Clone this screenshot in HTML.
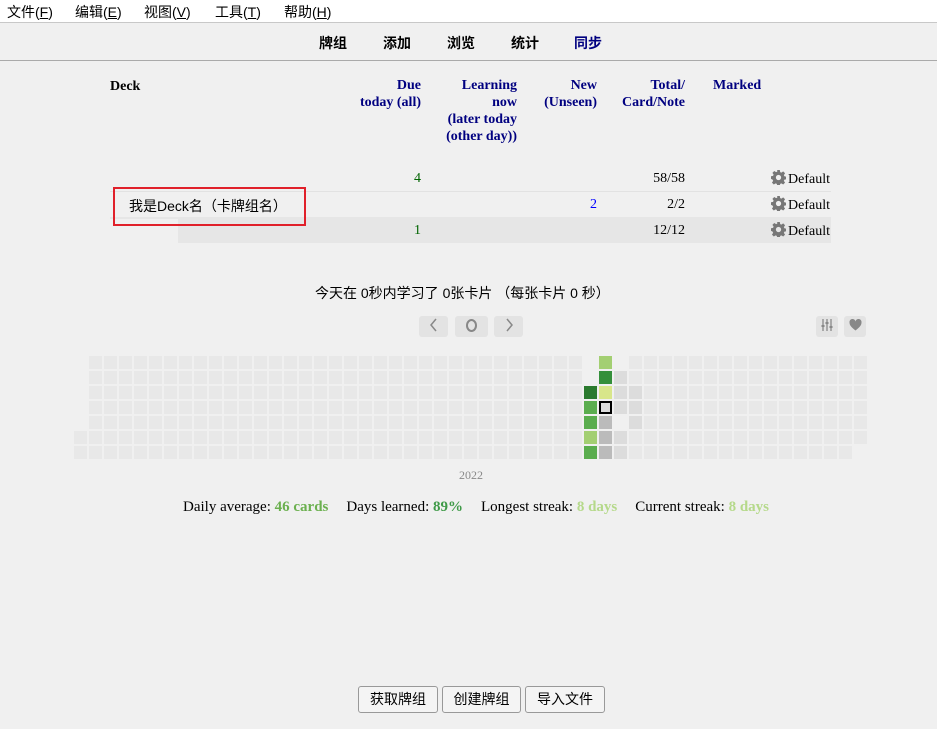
<!DOCTYPE html>
<html><head><meta charset="utf-8"><style>
*{margin:0;padding:0;box-sizing:border-box}
body{width:937px;height:729px;background:#f0f0f0;position:relative;overflow:hidden;font-family:"Liberation Serif","Noto Serif CJK SC",serif;font-size:14px;color:#000}
.a{position:absolute;white-space:nowrap}
.ui{font-family:"Liberation Sans","Noto Sans CJK SC",sans-serif}
.menu{left:0;top:0;width:937px;height:23px;background:#fff;border-bottom:1px solid #c8c8c8}
.menu span{position:absolute;top:2px;font-size:14px}
.tb{left:0;top:23px;width:937px;height:38px;border-bottom:1px solid #aaa;background:#f0f0f0}
.tb span{position:absolute;top:10px;font-size:14px;font-weight:bold}
.h{font-weight:bold;color:#000080;text-align:right;line-height:17px;font-size:14px}
.r{text-align:right}
.gear{display:inline-block;vertical-align:-2px;margin-right:2px}
.cell{position:absolute;width:13px;height:13px;background:#e8e8e8}
.btn{position:absolute;top:686px;height:27px;border:1px solid #999;border-radius:3px;background:#f4f4f4;font-size:14px;text-align:center;line-height:25px}
.nb{position:absolute;top:316px;height:21px;background:#e3e3e3;border-radius:3px;color:#888;text-align:center;font-size:15px;line-height:21px}
.st{font-size:15px}
.st i{display:inline-block;width:18px}
</style></head><body>
<div class="a menu ui">
<span style="left:7px">文件(<u>F</u>)</span>
<span style="left:75px">编辑(<u>E</u>)</span>
<span style="left:144px">视图(<u>V</u>)</span>
<span style="left:215px">工具(<u>T</u>)</span>
<span style="left:284px">帮助(<u>H</u>)</span>
</div>
<div class="a tb ui">
<span style="left:319px">牌组</span>
<span style="left:383px">添加</span>
<span style="left:447px">浏览</span>
<span style="left:511px">统计</span>
<span style="left:574px;color:#000080">同步</span>
</div>

<div class="a" style="left:110px;top:78px;font-weight:bold;line-height:17px">Deck</div>
<div class="a h" style="right:516px;top:77px">Due<br>today (all)</div>
<div class="a h" style="right:420px;top:77px">Learning<br>now<br>(later today<br>(other day))</div>
<div class="a h" style="right:340px;top:77px">New<br>(Unseen)</div>
<div class="a h" style="right:252px;top:77px">Total/<br>Card/Note</div>
<div class="a h" style="left:713px;top:77px;text-align:left">Marked</div>

<div class="a" style="left:110px;top:191px;width:721px;height:1px;background:#e2e2e2"></div>
<div class="a" style="left:110px;top:217px;width:68px;height:2px;background:#e6e6e6"></div>
<div class="a" style="left:178px;top:217px;width:653px;height:26px;background:#e6e6e6"></div>

<div class="a r" style="right:516px;top:171px;color:#006400">4</div>
<div class="a r" style="right:252px;top:171px">58/58</div>
<div class="a r" style="right:340px;top:197px;color:#0000ff">2</div>
<div class="a r" style="right:252px;top:197px">2/2</div>
<div class="a r" style="right:516px;top:223px;color:#006400">1</div>
<div class="a r" style="right:252px;top:223px">12/12</div>

<div class="a ui" style="left:113px;top:187px;width:193px;height:39px;border:2px solid #e0202a"></div>
<div class="a ui" style="left:129px;top:196px;font-size:14px">我是Deck名（卡牌组名）</div>

<svg width="0" height="0" style="position:absolute"><defs><symbol id="g" viewBox="0 0 16 16"><path fill="#777" d="M6.6 0h2.8l.4 2.2 1.3.6 1.9-1.3 2 2-1.3 1.9.6 1.3 2.2.4v2.8l-2.2.4-.6 1.3 1.3 1.9-2 2-1.9-1.3-1.3.6-.4 2.2H6.6l-.4-2.2-1.3-.6-1.9 1.3-2-2 1.3-1.9-.6-1.3L0 9.4V6.6l2.2-.4.6-1.3-1.3-1.9 2-2 1.9 1.3 1.3-.6zM8 5.2A2.8 2.8 0 1 0 8 10.8 2.8 2.8 0 1 0 8 5.2z"/></symbol></defs></svg>
<div class="a" style="right:107px;top:170px"><svg class="gear" width="15" height="15"><use href="#g"/></svg>Default</div>
<div class="a" style="right:107px;top:196px"><svg class="gear" width="15" height="15"><use href="#g"/></svg>Default</div>
<div class="a" style="right:107px;top:222px"><svg class="gear" width="15" height="15"><use href="#g"/></svg>Default</div>

<div class="a ui" style="left:315px;top:283px;font-size:14px">今天在 0秒内学习了 0张卡片 （每张卡片 0 秒）</div>

<div class="nb" style="left:419px;width:29px"><svg width="10" height="14" viewBox="0 0 10 14" style="vertical-align:-2px"><path d="M7 1L2 7l5 6" stroke="#888" stroke-width="1.5" fill="none"/></svg></div>
<div class="nb" style="left:455px;width:33px"><span style="display:inline-block;width:11px;height:13px;border:2px solid #888;border-radius:50%;vertical-align:-2px"></span></div>
<div class="nb" style="left:494px;width:29px"><svg width="10" height="14" viewBox="0 0 10 14" style="vertical-align:-2px"><path d="M3 1l5 6-5 6" stroke="#888" stroke-width="1.5" fill="none"/></svg></div>
<div class="nb" style="left:816px;width:22px"><svg width="14" height="14" viewBox="0 0 14 14" style="vertical-align:-2px"><path d="M3 1v12M7 1v12M11 1v12" stroke="#888" stroke-width="1.3"/><rect x="1.5" y="7" width="3" height="2" fill="#888"/><rect x="5.5" y="4" width="3" height="2" fill="#888"/><rect x="9.5" y="8" width="3" height="2" fill="#888"/></svg></div>
<div class="nb" style="left:844px;width:22px"><svg width="13" height="12" viewBox="0 0 13 12" style="vertical-align:-1px"><path d="M6.5 11.5C2 8 0.5 6 0.5 3.5A3 3 0 0 1 6.5 2.5 3 3 0 0 1 12.5 3.5C12.5 6 11 8 6.5 11.5z" fill="#888"/></svg></div>

<div id="hm"></div>
<div class="a" style="left:459px;top:468px;font-size:12px;color:#888">2022</div>

<div class="a st" style="left:183px;top:499px">Daily average: <b style="color:#6bb04f">46 cards</b><i></i>Days learned: <b style="color:#3f9a48">89%</b><i></i>Longest streak: <b style="color:#b5d98a">8 days</b><i></i>Current streak: <b style="color:#b5d98a">8 days</b></div>

<div class="btn ui" style="left:358px;width:80px">获取牌组</div>
<div class="btn ui" style="left:442px;width:79px">创建牌组</div>
<div class="btn ui" style="left:525px;width:80px">导入文件</div>

<script>
var hm=document.getElementById('hm'),h='';
var sp={'33,0':'none','33,1':'none','33,2':'#2a7a2e','33,3':'#5aad4e','33,4':'#5aad4e','33,5':'#a3cf72','33,6':'#5aad4e',
'34,0':'#a3cf72','34,1':'#348f3a','34,2':'#d8e68a','34,3':'X','34,4':'#bbb','34,5':'#bbb','34,6':'#bbb',
'35,0':'none','35,1':'#dcdcdc','35,2':'#dcdcdc','35,3':'#dcdcdc','35,4':'none','35,5':'#dcdcdc','35,6':'#dcdcdc',
'36,2':'#dcdcdc','36,3':'#dcdcdc','36,4':'#dcdcdc'};
for(var r=0;r<7;r++){var s=(r>=5)?-1:0,e=(r==6)?51:52;
for(var c=s;c<e;c++){var x=89+c*15,y=356+r*15,k=sp[c+','+r],st='';
if(k=='none')continue;
if(k=='X')st='background:#dcdcdc;border:2px solid #000';else if(k)st='background:'+k;
h+='<div class="cell" style="left:'+x+'px;top:'+y+'px;'+st+'"></div>';}}
hm.innerHTML=h;
</script>
</body></html>
